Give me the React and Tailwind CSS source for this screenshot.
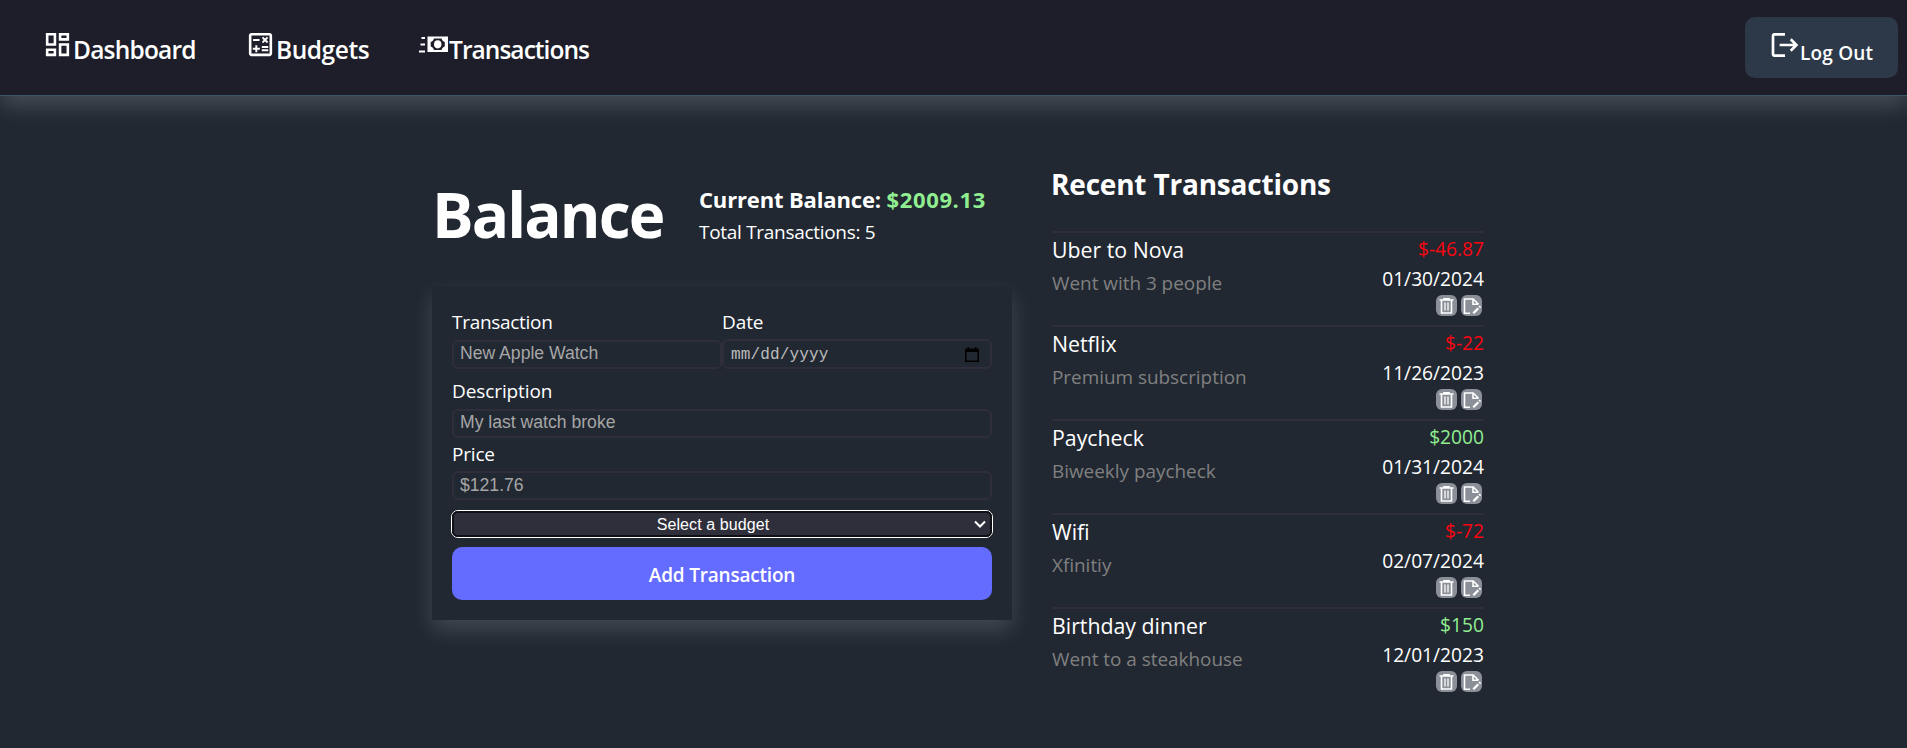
import React from "react";
import { MdOutlineDashboard, MdOutlineCalculate, MdLogout } from "react-icons/md";

const transactions = [
  { title: "Uber to Nova", note: "Went with 3 people", amount: -46.87, date: "01/30/2024" },
  { title: "Netflix", note: "Premium subscription", amount: -22, date: "11/26/2023" },
  { title: "Paycheck", note: "Biweekly paycheck", amount: 2000, date: "01/31/2024" },
  { title: "Wifi", note: "Xfinitiy", amount: -72, date: "02/07/2024" },
  { title: "Birthday dinner", note: "Went to a steakhouse", amount: 150, date: "12/01/2023" },
];

function CashIcon() {
  return (
    <svg className="h-[31px] w-[31px] shrink-0" viewBox="0 0 31 31" fill="currentColor">
      <path d="M3.500 8h3.500v2H3.500zM2.500 14.500h4.500v2H2.500zM1 21.500h6v2H1z" />
      <path
        fillRule="evenodd"
        d="M9.500 7.500H30v15.500H9.500zM16 9.500c-.6 1.800-1.600 3-3.300 3.400v4.700c1.700.4 2.700 1.600 3.300 3.400h7.500c.6-1.800 1.600-3 3.300-3.400v-4.700c-1.700-.4-2.700-1.600-3.300-3.400z"
      />
      <ellipse cx="19.700" cy="15.300" rx="3.700" ry="4.100" />
    </svg>
  );
}

function TrashIcon() {
  return (
    <svg className="h-[21px] w-[21px]" viewBox="0 0 21 21" fill="none" stroke="white" strokeWidth="1.600">
      <path d="M3.500 5h14M8 4.500V3.700h5v.8M5.500 5v13h10V5" />
      <path d="M9 7.500v8M12 7.500v8" strokeWidth="1.300" />
    </svg>
  );
}

function EditIcon() {
  return (
    <svg className="h-[21px] w-[21px]" viewBox="0 0 21 21" fill="none" stroke="white" strokeWidth="1.600">
      <path d="M9 18.200H3.500V4h8.700l5.300 5.200M12 4v5.300h5.500" />
      <path d="M12.300 18.300l5-5" strokeWidth="2.300" />
      <path d="M18.200 12.400l1.200-1.200" strokeWidth="2.300" />
    </svg>
  );
}

function NavLink({ icon, label, className, textClass }) {
  return (
    <a className={"flex items-start " + className}>
      {icon}
      <span className={"mt-[5px] whitespace-nowrap text-[24.5px] font-semibold leading-8 " + textClass}>{label}</span>
    </a>
  );
}

const inputClass =
  "block h-[29px] w-full rounded-[6px] border-2 border-[#302e3a] bg-transparent pl-[6px] pr-[5px] font-['Liberation_Sans',sans-serif] text-[17.6px] placeholder:text-[#a6a6a6] placeholder:opacity-100 outline-none";
const labelClass = "block text-[19px] leading-7";

function Row({ title, note, amount, date }) {
  return (
    <li className="flex h-[94px] justify-between border-t-2 border-[#302e3a] pt-[2px]">
      <div>
        <div className="text-[21.3px] leading-[30px]">{title}</div>
        <div className="mt-1 text-[18.9px] leading-7 text-[#808080]">{note}</div>
      </div>
      <div className="flex flex-col items-end text-[19.2px] leading-7">
        <div className={amount < 0 ? "text-[#fb0510]" : "text-[#90ee90]"}>{"$" + amount}</div>
        <div className="mt-[2px]">{date}</div>
        <div className="mr-[2px] mt-[2px] flex gap-1">
          <button className="h-[21px] w-[21px] rounded-[6px] bg-[#8a8f98]"><TrashIcon /></button>
          <button className="h-[21px] w-[21px] rounded-[6px] bg-[#8a8f98]"><EditIcon /></button>
        </div>
      </div>
    </li>
  );
}

export default function App() {
  return (
    <div className="h-[748px] overflow-hidden bg-[#212832] font-['Open_Sans','Noto_Sans',sans-serif] text-white">
      <nav className="flex h-24 items-start border-b border-[#3a5568] bg-[#1d1e29] pl-[42px] pr-[9px] shadow-[0_10px_20px_rgba(255,255,255,0.17)]">
        <div className="flex pt-[29px]">
          <NavLink
            className="w-[203px]"
            textClass="tracking-[-0.8px]"
            icon={<MdOutlineDashboard className="h-[31px] w-[31px] shrink-0" />}
            label="Dashboard"
          />
          <NavLink
            className="w-[173px]"
            textClass="tracking-[-0.45px]"
            icon={<MdOutlineCalculate className="h-[31px] w-[31px] shrink-0" />}
            label="Budgets"
          />
          <NavLink className="" textClass="tracking-[-0.95px]" icon={<CashIcon />} label="Transactions" />
        </div>
        <button className="ml-auto mt-[17px] flex h-[61px] w-[153px] items-start rounded-[10px] bg-[#2d3948] pl-[24px]">
          <MdLogout className="mt-[12px] h-8 w-8 shrink-0" />
          <span className="-ml-px mt-[22px] whitespace-nowrap text-[19px] font-semibold leading-7 tracking-[0.2px]">Log Out</span>
        </button>
      </nav>

      <main className="flex gap-10 pl-[432px]">
        <section className="w-[580px]">
          <header className="flex h-[190px] items-start">
            <h1 className="mt-[86px] w-[267px] text-[62px] font-bold leading-[64px] tracking-[-1.9px]">Balance</h1>
            <div className="mt-[88px]">
              <div className="text-[22px] font-bold leading-[30px] tracking-[-0.15px]">
                Current Balance: <span className="tracking-[0.65px] text-[#90ee90]">$2009.13</span>
              </div>
              <div className="mt-1 text-[19px] leading-7 tracking-[-0.3px]">Total Transactions: 5</div>
            </div>
          </header>

          <form className="h-[334px] bg-[#212832] px-5 pt-[22px] shadow-[0_10px_20px_rgba(255,255,255,0.15)]">
            <div className="grid grid-cols-2">
              <div>
                <label className="block text-[19px] leading-7 tracking-[-0.3px]">Transaction</label>
                <input className={inputClass + " mt-1 pb-[2px]"} placeholder="New Apple Watch" />
              </div>
              <div>
                <label className={labelClass + " tracking-[-0.1px]"}>Date</label>
                <div className="mt-[3px] flex h-[30px] items-center justify-between rounded-[6px] border-2 border-[#302e3a] pl-[7px] pr-[11px]">
                  <span className="mt-px font-['Liberation_Mono',monospace] text-[16px] leading-5 tracking-[0.15px] text-[#bcbcbc]">mm/dd/yyyy</span>
                  <svg className="h-[15px] w-[14px]" viewBox="0 0 14 15" fill="black">
                    <path fillRule="evenodd" d="M2.500 0H4v1.500h6V0h1.500v1.500H14V15H0V1.500h2.500zM1.500 5v8.500h11V5z" />
                  </svg>
                </div>
              </div>
            </div>
            <label className={labelClass + " mt-2 tracking-[-0.1px]"}>Description</label>
            <input className={inputClass + " mt-1 pb-[2px]"} placeholder="My last watch broke" />
            <label className={labelClass + " mt-[2px] tracking-[-0.2px]"}>Price</label>
            <input className={inputClass + " mt-[3px]"} placeholder="$121.76" />
            <div className="-mx-px mt-[10px] h-7 rounded-[7px] border border-white bg-[#111016]">
              <div className="flex h-[26px] items-center rounded-[6px] border-2 border-[#111016] bg-[#2f2f3b] pl-[4px] pr-[4px]">
                <span className="mt-px flex-1 pr-[6px] text-center font-['Liberation_Sans',sans-serif] text-[16px] leading-5 tracking-[0.1px]">
                  Select a budget
                </span>
                <svg className="h-3 w-3" viewBox="0 0 12 12" fill="none" stroke="white" strokeWidth="2">
                  <path d="M1 3.500l5 5 5-5" />
                </svg>
              </div>
            </div>
            <button
              type="button"
              className="mt-[9px] flex h-[53px] w-full items-center justify-center rounded-[10px] bg-[#646cff] pt-[2px] text-[19px] font-semibold leading-7 tracking-[-0.2px]"
            >
              Add Transaction
            </button>
          </form>
        </section>

        <section className="w-[432px]">
          <h2 className="-ml-px mt-[68px] text-[28px] font-bold leading-10 tracking-[-0.2px]">Recent Transactions</h2>
          <ul className="mt-[27px]">
            {transactions.map((t) => (
              <Row key={t.title} {...t} />
            ))}
          </ul>
        </section>
      </main>
    </div>
  );
}
